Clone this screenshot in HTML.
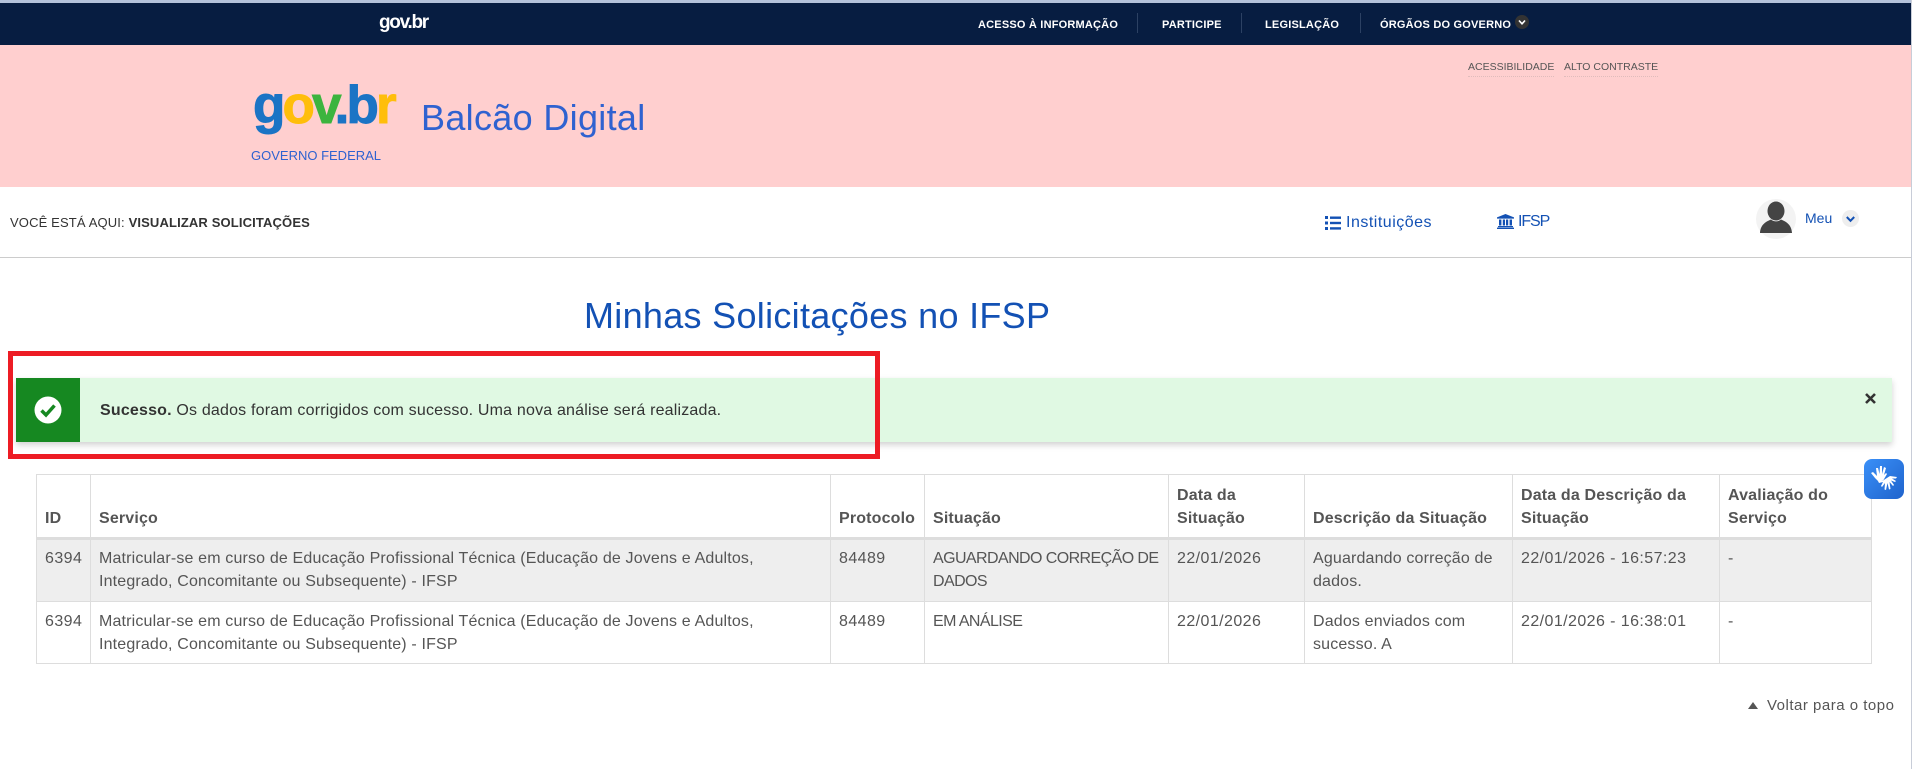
<!DOCTYPE html>
<html lang="pt-BR">
<head>
<meta charset="utf-8">
<title>Balcão Digital</title>
<style>
html,body{margin:0;padding:0;width:1912px;height:769px;overflow:hidden;background:#fff;font-family:"Liberation Sans",sans-serif}
.a{position:absolute;white-space:nowrap}
.t{line-height:20px}
#top{position:absolute;left:0;top:0;width:1912px;height:45px;background:#071d41;border-top:3px solid #b4c2da;box-sizing:border-box}
#pink{position:absolute;left:0;top:45px;width:1912px;height:142px;background:#ffcfcf}
.nav{font-size:11px;font-weight:bold;color:#fff;line-height:20px;top:15px;letter-spacing:.2px}
.sep{position:absolute;top:13px;width:1px;height:20px;background:#2c4163}
table{position:absolute;left:36px;top:474px;border-collapse:collapse;table-layout:fixed;width:1835px;font-size:16px;color:#555;line-height:23px;letter-spacing:.16px}
td,th{border:1px solid #ddd;padding:0 8px;text-align:left;vertical-align:top;white-space:nowrap;box-sizing:border-box}
th{vertical-align:bottom;border-bottom:3px solid #ddd;height:64px;padding-bottom:7px;font-weight:bold}
td{padding-top:7px}
tr.r1 td{background:#eee;height:63px}
tr.r2 td{height:62px;padding-top:8px}
.n{letter-spacing:.42px}
.u{letter-spacing:-.58px}
</style>
</head>
<body>
<div id="top"></div>
<div id="pink"></div>

<div class="a" style="left:379px;top:12px;font-size:19px;font-weight:bold;color:#fff;letter-spacing:-1.3px;line-height:22px">gov.br</div>
<div class="a nav" style="left:978px">ACESSO À INFORMAÇÃO</div>
<div class="sep" style="left:1137px"></div>
<div class="a nav" style="left:1162px">PARTICIPE</div>
<div class="sep" style="left:1241px"></div>
<div class="a nav" style="left:1265px">LEGISLAÇÃO</div>
<div class="sep" style="left:1360px"></div>
<div class="a nav" style="left:1380px">ÓRGÃOS DO GOVERNO</div>
<svg class="a" style="left:1515px;top:15px" width="14" height="14" viewBox="0 0 14 14"><circle cx="7" cy="7" r="7" fill="#333"/><path d="M4 5.500 7 8.800 10 5.500" fill="none" stroke="#fff" stroke-width="1.600"/></svg>

<div class="a" style="left:1468px;top:59px;font-size:10.5px;color:#555;line-height:17px;border-bottom:1px dotted #e0bcbc;height:17px">ACESSIBILIDADE</div>
<div class="a" style="left:1564px;top:59px;font-size:10.5px;color:#555;line-height:17px;border-bottom:1px dotted #e0bcbc;height:17px">ALTO CONTRASTE</div>

<svg class="a" style="left:245px;top:75px;overflow:visible" width="160" height="70">
<text x="8" y="48" font-family="Liberation Sans, sans-serif" font-size="53" font-weight="bold" letter-spacing="-2.900" stroke-width="1"><tspan fill="#1b74c5" stroke="#1b74c5">g</tspan><tspan fill="#ffbe0b" stroke="#ffbe0b">o</tspan><tspan fill="#3cb43e" stroke="#3cb43e">v</tspan><tspan fill="#1b74c5" stroke="#1b74c5">.b</tspan><tspan fill="#ffbe0b" stroke="#ffbe0b">r</tspan></text>
</svg>
<div class="a t" style="left:251px;top:146px;font-size:13px;color:#2f62d0">GOVERNO FEDERAL</div>
<div class="a" style="left:421px;top:97px;font-size:36px;line-height:42px;color:#2f62d0;letter-spacing:.32px">Balcão Digital</div>

<div class="a t" style="left:10px;top:213px;font-size:13px;color:#333;letter-spacing:.14px">VOCÊ ESTÁ AQUI: <b>VISUALIZAR SOLICITAÇÕES</b></div>

<svg class="a" style="left:1325px;top:216px" width="16" height="14" viewBox="0 0 16 14" fill="#1351b4"><rect x="0" y="0" width="3" height="3"/><rect x="5" y="0.500" width="11" height="2.400"/><rect x="0" y="5.500" width="3" height="3"/><rect x="5" y="5.800" width="11" height="2.400"/><rect x="0" y="11" width="3" height="3"/><rect x="5" y="11.200" width="11" height="2.400"/></svg>
<div class="a t" style="left:1346px;top:213px;font-size:16px;color:#1351b4;letter-spacing:.5px">Instituições</div>
<svg class="a" style="left:1497px;top:214px" width="17" height="15" viewBox="0 0 17 15" fill="#1351b4"><path d="M8.500 0 17 3.400V4.600H0V3.400Z"/><rect x="2" y="5.500" width="2.400" height="6"/><rect x="5.800" y="5.500" width="2.200" height="6"/><rect x="9" y="5.500" width="2.200" height="6"/><rect x="12.600" y="5.500" width="2.400" height="6"/><rect x="1" y="12" width="15" height="1.200"/><rect x="0" y="13.600" width="17" height="1.400"/></svg>
<div class="a t" style="left:1518px;top:212px;font-size:16px;color:#1351b4;letter-spacing:-1.1px">IFSP</div>

<svg class="a" style="left:1756px;top:199px" width="40" height="40" viewBox="0 0 40 40"><circle cx="20" cy="20" r="20" fill="#f3f3f3"/><ellipse cx="20" cy="12" rx="8.500" ry="9.500" fill="#444"/><path d="M4 34C4.500 26 9 23 15 20.500 18 23 22 23 25 20.500 31 23 35.500 26 36 34Z" fill="#444"/></svg>
<div class="a t" style="left:1805px;top:208px;font-size:14px;color:#1351b4">Meu</div>
<svg class="a" style="left:1842px;top:210px" width="17" height="17" viewBox="0 0 17 17"><circle cx="8.500" cy="8.500" r="8.500" fill="#eee"/><path d="M4.800 7 8.500 10.800 12.200 7" fill="none" stroke="#1351b4" stroke-width="2"/></svg>
<div class="a" style="left:0;top:257px;width:1912px;height:1px;background:#ccc"></div>

<div class="a" style="left:584px;top:292px;font-size:36px;line-height:48px;color:#1351b4;letter-spacing:.3px">Minhas Solicitações no IFSP</div>

<div class="a" style="left:16px;top:378px;width:1876px;height:64px;background:#e0f9e3;box-shadow:0 3px 6px rgba(0,0,0,.18)"></div>
<div class="a" style="left:16px;top:378px;width:64px;height:64px;background:#168821"></div>
<svg class="a" style="left:34px;top:396px" width="28" height="28" viewBox="0 0 28 28"><circle cx="14" cy="14" r="13.500" fill="#fff"/><path d="M7.500 14.500 12 19 20.500 9.500" fill="none" stroke="#168821" stroke-width="3.500"/></svg>
<div class="a t" style="left:100px;top:401px;font-size:16px;color:#333;letter-spacing:.185px"><b>Sucesso.</b> Os dados foram corrigidos com sucesso. Uma nova análise será realizada.</div>
<svg class="a" style="left:1865px;top:393px" width="11" height="11" viewBox="0 0 11 11"><path d="M1 1 10 10M10 1 1 10" stroke="#333" stroke-width="2.600"/></svg>

<div class="a" style="left:8px;top:351px;width:872px;height:108px;border:5px solid #ed1c24;box-sizing:border-box"></div>

<table>
<colgroup><col style="width:54px"><col style="width:740px"><col style="width:94px"><col style="width:244px"><col style="width:136px"><col style="width:208px"><col style="width:207px"><col style="width:152px"></colgroup>
<tr><th>ID</th><th>Serviço</th><th>Protocolo</th><th>Situação</th><th>Data da<br>Situação</th><th>Descrição da Situação</th><th>Data da Descrição da<br>Situação</th><th>Avaliação do<br>Serviço</th></tr>
<tr class="r1"><td class="n">6394</td><td>Matricular-se em curso de Educação Profissional Técnica (Educação de Jovens e Adultos,<br>Integrado, Concomitante ou Subsequente) - IFSP</td><td class="n">84489</td><td class="u">AGUARDANDO CORREÇÃO DE<br>DADOS</td><td class="n">22/01/2026</td><td>Aguardando correção de<br>dados.</td><td class="n">22/01/2026 - 16:57:23</td><td>-</td></tr>
<tr class="r2"><td class="n">6394</td><td>Matricular-se em curso de Educação Profissional Técnica (Educação de Jovens e Adultos,<br>Integrado, Concomitante ou Subsequente) - IFSP</td><td class="n">84489</td><td class="u">EM ANÁLISE</td><td class="n">22/01/2026</td><td>Dados enviados com<br>sucesso. A</td><td class="n">22/01/2026 - 16:38:01</td><td>-</td></tr>
</table>

<div class="a" style="left:1864px;top:459px;width:40px;height:40px;border-radius:8px;background:linear-gradient(135deg,#3a90f8,#1f63cc)"></div>
<svg class="a" style="left:1870px;top:465px" width="29" height="28" viewBox="0 0 29 28" fill="#fff"><path d="M3 7 7 11 6 3 8 3 9.500 9 10 1 12 1 12 9 14 2 16 3 14 10 16 8 17 9 13.500 15 9 17 5 13 1 8Z"/><path d="M8 16 13 15.500 20 11 27 12 26 13.500 22 13.500 26 16 25 17 21 15.500 24 20 23 21 19.500 17 20.500 24 19 24.500 17.500 18 16 25 14.500 24.500 15 18 12 22 11 21 13 17 9 18Z"/></svg>

<svg class="a" style="left:1748px;top:702px" width="10" height="7" viewBox="0 0 10 7"><path d="M5 0 10 7H0Z" fill="#555"/></svg>
<div class="a t" style="left:1767px;top:696px;font-size:15px;color:#555;letter-spacing:.5px">Voltar para o topo</div>

<div class="a" style="left:1911px;top:0;width:1px;height:769px;background:#c8cdd8"></div>
</body>
</html>
